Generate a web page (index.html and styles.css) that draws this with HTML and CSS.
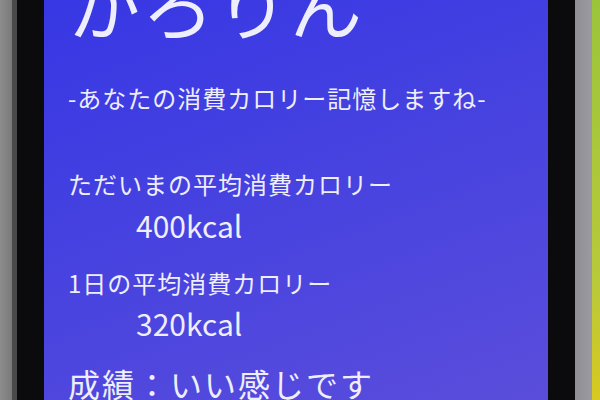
FILE: index.html
```html
<!DOCTYPE html>
<html lang="ja">
<head>
  <meta charset="UTF-8" />
  <title>かろりん</title>
  <link rel="stylesheet" href="styles.css">
</head>
<body>
  <div class="desk">
    <div class="edge-left"></div>
    <div class="bezel"></div>
    <div class="screen">
      <h1 class="app-title">かろりん</h1>
      <p class="tagline">-あなたの消費カロリー記憶しますね-</p>

      <div class="stat">
        <div class="stat-label">ただいまの平均消費カロリー</div>
        <div class="stat-value">400kcal</div>
      </div>

      <div class="stat">
        <div class="stat-label">1日の平均消費カロリー</div>
        <div class="stat-value">320kcal</div>
      </div>

      <div class="grade">成績：いい感じです</div>
    </div>
    <div class="bezel"></div>
    <div class="edge-right"></div>
    <div class="desk-edge"></div>
  </div>
</body>
</html>
```

FILE: styles.css
```css
body {
  margin: 0;
  height: 100vh;
  overflow: hidden;
  font-family: "Noto Sans CJK JP", "Noto Sans", sans-serif;
  background: #111;
}

.desk {
  display: flex;
  height: 400px;
}

.edge-left {
  width: 12px;
  background: linear-gradient(to right, #8c8c8c, #7a7a7a);
  border-right: 5px solid #4a4a4a;
}

.bezel {
  width: 27px;
  background: #0b0b0e;
}

.screen {
  width: 504px;
  padding-left: 24px;
  box-sizing: border-box;
  background: linear-gradient(160deg, #3737e4 0%, #4642e0 45%, #5a4ddb 100%);
  color: #eeeefc;
  overflow: hidden;
}

.app-title {
  margin: -40px 0 0;
  font-size: 72px;
  font-weight: 400;
  line-height: 1.2;
  letter-spacing: 2px;
}

.tagline {
  margin: 35px 0 0;
  font-size: 24px;
  line-height: 1.4;
  letter-spacing: 1px;
}

.stat {
  margin-top: 52px;
}

.stat + .stat {
  margin-top: 21px;
}

.stat-label {
  font-size: 24px;
  line-height: 1.4;
  letter-spacing: 1px;
}

.stat-value {
  padding-top: 5px;
  padding-left: 68px;
  font-size: 30px;
  line-height: 1.3;
}

.grade {
  margin-top: 18px;
  font-size: 32px;
  line-height: 1.4;
  letter-spacing: 2px;
}

.edge-right {
  width: 17px;
  background: linear-gradient(to right, #8e8e94, #9a9aa0);
}

.desk-edge {
  flex: 1;
  background: linear-gradient(to bottom, #9bc43a, #b8c93a 70%, #d8c820);
}
```
